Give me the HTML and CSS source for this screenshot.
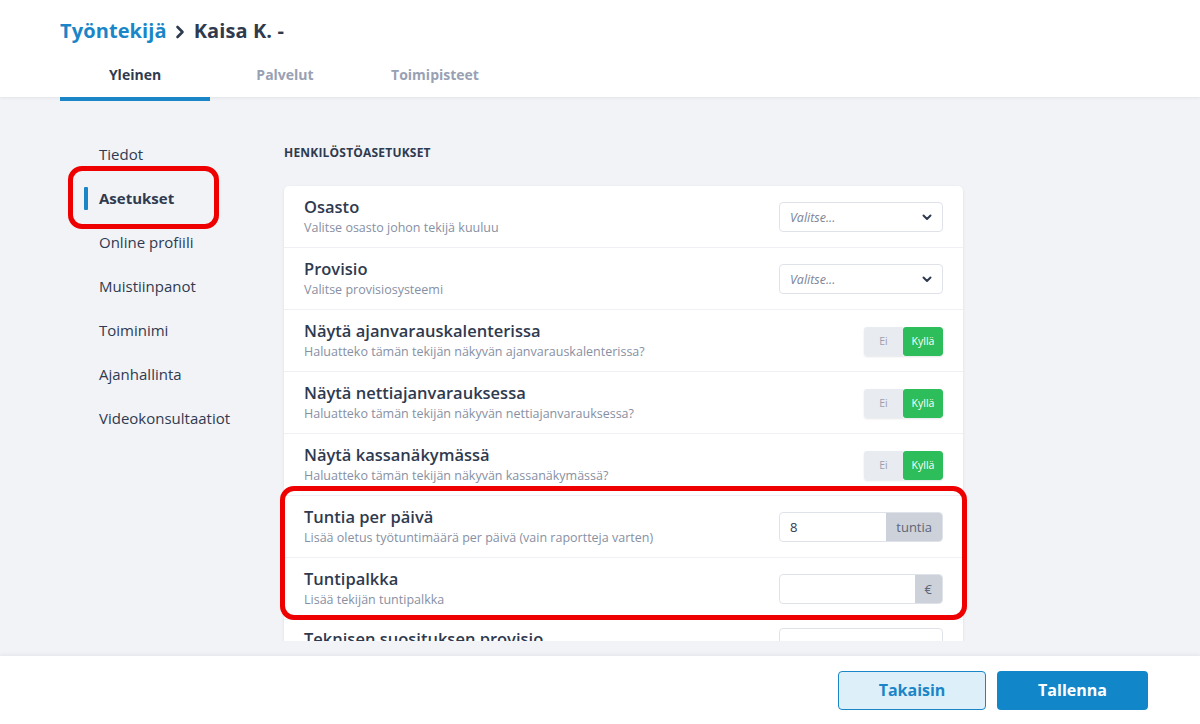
FILE: index.html
```html
<!DOCTYPE html>
<html lang="fi">
<head>
<meta charset="utf-8">
<title>Työntekijä - Kaisa K.</title>
<link rel="stylesheet" href="styles.css">
</head>
<body>

<div class="header">
	<h1 class="crumbs"><a href="#">Työntekijä</a><svg class="sep" width="10" height="14" viewBox="0 0 10 14"><path d="M2.5 2 7.5 7l-5 5" fill="none" stroke="#2f3a4f" stroke-width="2.6" stroke-linecap="round" stroke-linejoin="round"/></svg>Kaisa K. -</h1>
	<div class="tabs">
		<a class="tab active" href="#">Yleinen</a>
		<a class="tab" href="#">Palvelut</a>
		<a class="tab" href="#">Toimipisteet</a>
	</div>
</div>

<div class="main">
	<div class="scroll">
		<ul class="sidenav">
			<li>Tiedot</li>
			<li class="active">Asetukset</li>
			<li>Online profiili</li>
			<li>Muistiinpanot</li>
			<li>Toiminimi</li>
			<li>Ajanhallinta</li>
			<li>Videokonsultaatiot</li>
		</ul>
		<div class="mark mark-nav"></div>

		<div class="content">
			<div class="section-title">HENKILÖSTÖASETUKSET</div>
			<div class="card">
				<div class="row">
					<div class="label"><div class="name">Osasto</div><div class="desc">Valitse osasto johon tekijä kuuluu</div></div>
					<div class="select"><span>Valitse...</span><svg width="10" height="7" viewBox="0 0 10 7"><path d="M1.5 1.5 5 5l3.5-3.5" fill="none" stroke="#2f3a4f" stroke-width="2" stroke-linecap="round" stroke-linejoin="round"/></svg></div>
				</div>
				<div class="row">
					<div class="label"><div class="name">Provisio</div><div class="desc">Valitse provisiosysteemi</div></div>
					<div class="select"><span>Valitse...</span><svg width="10" height="7" viewBox="0 0 10 7"><path d="M1.5 1.5 5 5l3.5-3.5" fill="none" stroke="#2f3a4f" stroke-width="2" stroke-linecap="round" stroke-linejoin="round"/></svg></div>
				</div>
				<div class="row">
					<div class="label"><div class="name">Näytä ajanvarauskalenterissa</div><div class="desc">Haluatteko tämän tekijän näkyvän ajanvarauskalenterissa?</div></div>
					<div class="toggle"><span class="off">Ei</span><span class="on">Kyllä</span></div>
				</div>
				<div class="row">
					<div class="label"><div class="name">Näytä nettiajanvarauksessa</div><div class="desc">Haluatteko tämän tekijän näkyvän nettiajanvarauksessa?</div></div>
					<div class="toggle"><span class="off">Ei</span><span class="on">Kyllä</span></div>
				</div>
				<div class="row">
					<div class="label"><div class="name">Näytä kassanäkymässä</div><div class="desc">Haluatteko tämän tekijän näkyvän kassanäkymässä?</div></div>
					<div class="toggle"><span class="off">Ei</span><span class="on">Kyllä</span></div>
				</div>
				<div class="row">
					<div class="label"><div class="name">Tuntia per päivä</div><div class="desc">Lisää oletus työtuntimäärä per päivä (vain raportteja varten)</div></div>
					<div class="input-group"><span class="value">8</span><span class="addon">tuntia</span></div>
				</div>
				<div class="row">
					<div class="label"><div class="name">Tuntipalkka</div><div class="desc">Lisää tekijän tuntipalkka</div></div>
					<div class="input-group"><span class="value"></span><span class="addon">€</span></div>
				</div>
				<div class="row last">
					<div class="label"><div class="name">Teknisen suosituksen provisio</div></div>
					<div class="input-group"><span class="value"></span></div>
				</div>
			</div>
			<div class="mark mark-rows"></div>
		</div>
	</div>
</div>

<div class="footer">
	<a class="btn btn-back" href="#">Takaisin</a>
	<a class="btn btn-save" href="#">Tallenna</a>
</div>

</body>
</html>
```

FILE: styles.css
```css
HTML, BODY {
    margin : 0;
    height : 100%;
}
BODY {
    font-family : "Open Sans", "Noto Sans", sans-serif;
    color : #2f3a4f;
    background : #f1f3f7;
    display : flex;
    flex-direction : column;
    overflow : hidden;
}
A {
    text-decoration : none;
}

/* header */
.header {
    background : #fff;
    height : 97px;
    padding-left : 60px;
    box-shadow : 0 1px 3px rgba(40, 50, 70, 0.08);
    position : relative;
    z-index : 2;
    flex : none;
}
.crumbs {
    margin : 0;
    padding-top : 16px;
    height : 29px;
    line-height : 29px;
    font-size : 20px;
    font-weight : 700;
    letter-spacing : 0.1px;
}
.crumbs A {
    color : #1a86c7;
}
.sep {
    margin : 0 9px 0 8px;
    vertical-align : -1px;
}
.tabs {
    display : flex;
    margin-top : 20px;
}
.tab {
    width : 150px;
    text-align : center;
    font-size : 14px;
    font-weight : 700;
    color : #98a1b3;
    line-height : 20px;
    padding-bottom : 12px;
    border-bottom : 4px solid transparent;
}
.tab.active {
    color : #2f3a4f;
    border-bottom-color : #1a86c7;
}

/* main */
.main {
    flex : 1;
    padding-bottom : 15px;
    min-height : 0;
}
.scroll {
    height : 100%;
    overflow : hidden;
    display : flex;
    position : relative;
}
.sidenav {
    list-style : none;
    margin : 0;
    padding : 45px 0 0 84px;
    width : 200px;
    flex : none;
}
.sidenav LI {
    font-size : 15px;
    line-height : 24px;
    height : 44px;
    padding-left : 15px;
    position : relative;
    color : #2f3a4f;
}
.sidenav LI.active {
    font-weight : 700;
}
.sidenav LI.active:before {
    content : "";
    position : absolute;
    left : 0;
    top : 1px;
    width : 4px;
    height : 23px;
    background : #1a86c7;
    border-radius : 1px;
}
.content {
    width : 679px;
    padding-top : 47px;
    position : relative;
}
.section-title {
    font-size : 12px;
    font-weight : 700;
    letter-spacing : 0.2px;
    line-height : 18px;
    margin-bottom : 24px;
}
.card {
    background : #fff;
    border-radius : 5px;
    box-shadow : 0 1px 3px rgba(40, 50, 70, 0.10);
}
.row {
    display : flex;
    align-items : center;
    justify-content : space-between;
    padding : 10px 20px 9px;
    border-bottom : 1px solid #eef0f3;
}
.row.last {
    padding-top : 8px;
    align-items : flex-start;
}
.name {
    font-size : 16.5px;
    font-weight : 600;
    line-height : 22px;
}
.desc {
    font-size : 12.5px;
    line-height : 20px;
    color : #8790a3;
}
.select {
    width : 142px;
    height : 28px;
    border : 1px solid #dfe3e9;
    border-radius : 4px;
    display : flex;
    align-items : center;
    justify-content : space-between;
    padding : 0 10px;
    font-size : 12.5px;
    font-style : italic;
    color : #7d8596;
}
.toggle {
    display : flex;
    height : 29px;
    font-size : 10.5px;
    border-radius : 3px;
    overflow : hidden;
    box-shadow : 0 1px 2px rgba(40, 50, 70, 0.12);
}
.toggle SPAN {
    display : flex;
    align-items : center;
    justify-content : center;
}
.toggle .off {
    width : 39px;
    background : #e8ebef;
    color : #99a1b1;
}
.toggle .on {
    width : 40px;
    background : #2dbd5a;
    color : #fff;
    border-radius : 3px;
}
.input-group {
    width : 162px;
    height : 28px;
    display : flex;
    border : 1px solid #dfe3e9;
    border-radius : 4px;
    overflow : hidden;
    font-size : 13px;
}
.input-group .value {
    flex : 1;
    padding-left : 10px;
    line-height : 28px;
}
.input-group .addon {
    background : #cdd2da;
    color : #5c6578;
    padding : 0 10px;
    line-height : 28px;
}

/* red annotation frames */
.mark {
    position : absolute;
    border : 5px solid #ee0000;
    border-radius : 14px;
    pointer-events : none;
}
.mark-nav {
    left : 68px;
    top : 69px;
    width : 141px;
    height : 53px;
}
.mark-rows {
    left : -4px;
    top : 389px;
    width : 677px;
    height : 124px;
}

/* footer */
.footer {
    flex : none;
    height : 68px;
    background : #fff;
    box-shadow : 0 -1px 4px rgba(40, 50, 70, 0.08);
    display : flex;
    justify-content : flex-end;
    align-items : center;
    padding-right : 52px;
    gap : 11px;
    position : relative;
    z-index : 2;
}
.btn {
    height : 39px;
    line-height : 39px;
    border-radius : 4px;
    text-align : center;
    font-size : 16px;
    font-weight : 700;
    box-sizing : border-box;
}
.btn-back {
    width : 148px;
    background : #ddf0fa;
    border : 1px solid #1a86c7;
    line-height : 37px;
    color : #1a86c7;
}
.btn-save {
    width : 151px;
    background : #1187c9;
    color : #fff;
}
```
